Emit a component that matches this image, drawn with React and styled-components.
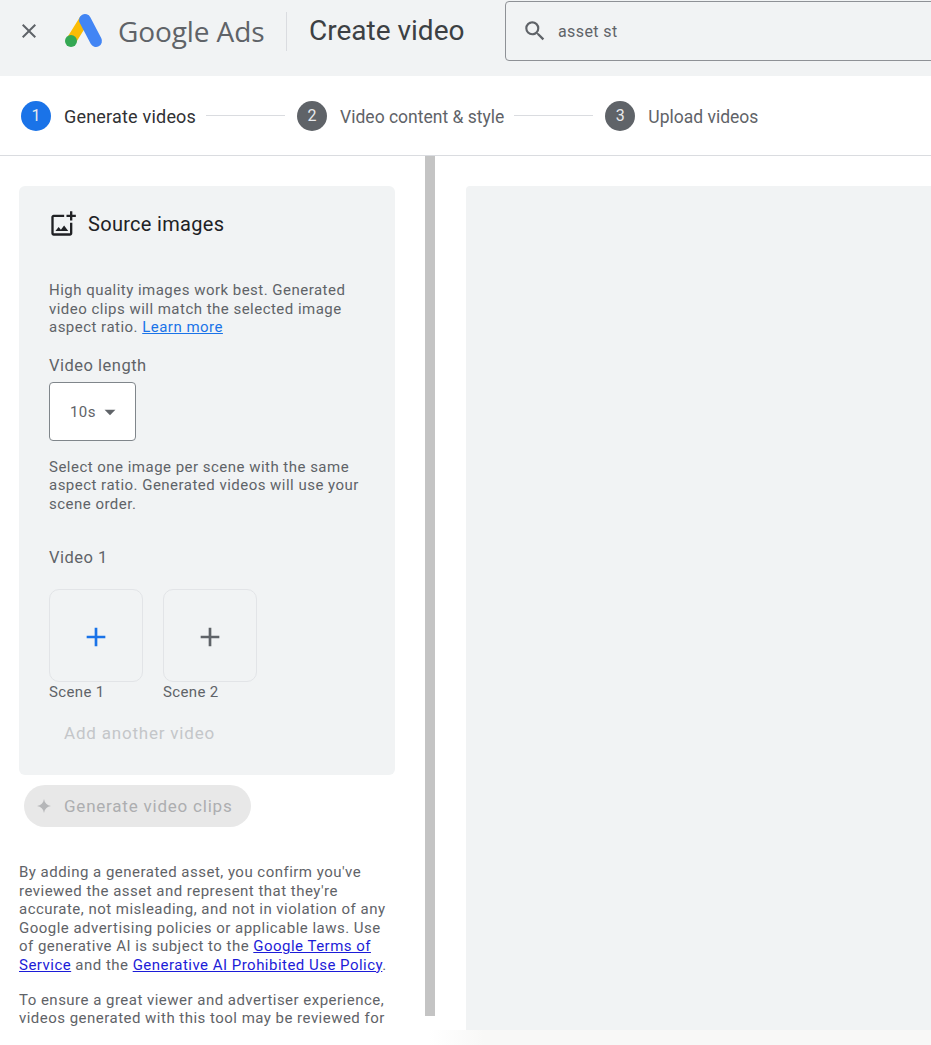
import React from 'react';
import styled, { createGlobalStyle } from 'styled-components';
import { MdOutlineAddPhotoAlternate, MdClose, MdSearch, MdArrowDropDown, MdAdd } from 'react-icons/md';

const GlobalStyle = createGlobalStyle`
  html, body {
    margin: 0;
    padding: 0;
    background: #fff;
    overflow: hidden;
  }
  * {
    box-sizing: border-box;
  }
`;

const Page = styled.div`
  width: 931px;
  height: 1045px;
  display: flex;
  flex-direction: column;
  overflow: hidden;
  font-family: Roboto, 'Liberation Sans', sans-serif;
  color: #5f6368;
`;

const Header = styled.header`
  height: 76px;
  flex: none;
  display: flex;
  align-items: flex-start;
  background: #f1f3f4;
  overflow: hidden;
`;

const CloseButton = styled.div`
  width: 58px;
  height: 62px;
  flex: none;
  padding-left: 17px;
  display: flex;
  align-items: center;
  color: #5f6368;
`;

const LogoMark = styled.svg`
  width: 44px;
  height: 40px;
  margin-top: 11px;
  margin-left: 3px;
  flex: none;
`;

const Brand = styled.div`
  margin-left: 13px;
  height: 62px;
  line-height: 62px;
  font-family: 'Open Sans', Roboto, sans-serif;
  font-size: 28px;
  letter-spacing: -0.1px;
  color: #5f6368;
  width: 168px;
  flex: none;
`;

const Divider = styled.div`
  width: 1px;
  height: 39px;
  margin-top: 12px;
  background: #dadce0;
  flex: none;
`;

const PageTitle = styled.div`
  margin-left: 22px;
  height: 62px;
  line-height: 62px;
  font-size: 28px;
  color: #3c4043;
  width: 174px;
  flex: none;
`;

const SearchBox = styled.div`
  margin-left: 22px;
  margin-top: 1px;
  width: 500px;
  height: 60px;
  flex: none;
  display: flex;
  align-items: center;
  gap: 10px;
  padding-left: 16px;
  border: 1px solid #8e9196;
  border-radius: 4px;
  font-size: 16px;
  letter-spacing: 0.4px;
  color: #5f6368;
`;

const Stepper = styled.nav`
  height: 80px;
  flex: none;
  display: flex;
  align-items: center;
  padding: 0 0 0 21px;
  border-bottom: 1px solid #dadce0;
  background: #fff;
`;

const StepCircle = styled.div`
  width: 30px;
  height: 30px;
  border-radius: 50%;
  flex: none;
  display: flex;
  align-items: center;
  justify-content: center;
  font-size: 16px;
  color: #e8eaed;
  background: ${(p) => (p.$active ? '#1a73e8' : '#5f6368')};
`;

const StepLabel = styled.span`
  margin-left: 13px;
  padding-top: ${(p) => (p.$active ? '1px' : '2px')};
  font-size: ${(p) => (p.$active ? '18px' : '17.5px')};
  white-space: nowrap;
  letter-spacing: ${(p) => (p.$active ? '0.2px' : '0')};
  color: ${(p) => (p.$active ? '#303134' : '#5f6368')};
`;

const StepLine = styled.div`
  width: 79px;
  height: 1px;
  margin: 0 12px 0 10px;
  background: #dadce0;
  flex: none;
`;

const Main = styled.div`
  flex: 1;
  min-height: 0;
  display: flex;
`;

const LeftPane = styled.aside`
  width: 425px;
  flex: none;
  padding: 30px 30px 0 19px;
  overflow: hidden;
`;

const Scrollbar = styled.div`
  width: 10px;
  height: 860px;
  flex: none;
  background: #c4c4c4;
`;

const RightPane = styled.section`
  flex: 1;
  padding: 30px 0 0 31px;
`;

const PreviewPanel = styled.div`
  height: 100%;
  background: #f1f3f4;
  border-radius: 4px 0 0 0;
`;

const Card = styled.div`
  width: 376px;
  height: 589px;
  background: #f1f3f4;
  border-radius: 6px;
  padding: 24px 30px 0;
`;

const CardTitle = styled.div`
  display: flex;
  align-items: center;
  gap: 11px;
  height: 28px;
  font-size: 20px;
  letter-spacing: 0.3px;
  color: #202124;
`;

const HelpText = styled.p`
  margin: ${(p) => p.$top || 0}px 0 0;
  width: 312px;
  font-size: 15px;
  line-height: 18.6px;
  letter-spacing: 0.48px;
  color: #5f6368;
`;

const BlueLink = styled.a`
  color: #1a73e8;
  text-decoration: underline;
`;

const FieldLabel = styled.div`
  margin-top: ${(p) => p.$top}px;
  font-size: 16.5px;
  line-height: 20px;
  letter-spacing: 0.5px;
  color: #5f6368;
`;

const SelectBox = styled.div`
  margin-top: 6px;
  width: 87px;
  height: 59px;
  display: flex;
  align-items: center;
  padding: 2px 0 0 20px;
  background: #fff;
  border: 1px solid #80868b;
  border-radius: 4px;
  font-size: 15px;
  letter-spacing: 0.4px;
  color: #5f6368;

  svg {
    margin-left: 1px;
  }
`;

const Scenes = styled.div`
  display: flex;
  gap: 20px;
  margin-top: 21px;
`;

const Scene = styled.div`
  display: flex;
  flex-direction: column;
`;

const SceneTile = styled.div`
  width: 94px;
  height: 93px;
  padding-top: 3px;
  display: flex;
  align-items: center;
  justify-content: center;
  border: 1px solid #e2e4e7;
  border-radius: 10px;
  color: ${(p) => (p.$active ? '#1a73e8' : '#5f6368')};
`;

const SceneLabel = styled.div`
  font-size: 15px;
  line-height: 20px;
  letter-spacing: 0.35px;
  color: #5f6368;
`;

const AddVideo = styled.div`
  margin: 21px 0 0 15px;
  font-size: 17px;
  line-height: 20px;
  letter-spacing: 0.8px;
  color: #c4c6c9;
`;

const GenerateButton = styled.div`
  margin: 10px 0 0 5px;
  width: 227px;
  height: 42px;
  display: flex;
  align-items: center;
  gap: 13px;
  padding-left: 13px;
  border-radius: 21px;
  background: #e8e8e8;
  font-size: 17px;
  letter-spacing: 0.78px;
  color: #adaeb0;
`;

const Notice = styled.p`
  margin: ${(p) => p.$top}px 0 0;
  width: 372px;
  font-size: 15px;
  line-height: 18.6px;
  letter-spacing: 0.48px;
  color: #5f6368;
`;

const PolicyLink = styled.a`
  color: #1c1cd8;
  text-decoration: underline;
`;

const Footer = styled.div`
  height: 15px;
  flex: none;
  background: linear-gradient(to right, #fff 46%, #f8f8f7 52%);
`;

function GoogleAdsLogo() {
  return (
    <LogoMark viewBox="0 0 44 40">
      <path d="M10 30 L23 9" stroke="#fbbc04" strokeWidth="10" strokeLinecap="round" />
      <path d="M24 9 L35 30" stroke="#4285f4" strokeWidth="12" strokeLinecap="round" />
      <circle cx="10" cy="30" r="6" fill="#34a853" />
    </LogoMark>
  );
}

function Spark() {
  return (
    <svg width="14" height="14" viewBox="0 0 14 14">
      <path d="M7 0 C7.6 4 10 6.4 14 7 C10 7.6 7.6 10 7 14 C6.4 10 4 7.6 0 7 C4 6.4 6.4 4 7 0 Z" fill="#b5b6b8" />
    </svg>
  );
}

const steps = [
  { n: 1, label: 'Generate videos', active: true },
  { n: 2, label: 'Video content & style' },
  { n: 3, label: 'Upload videos' },
];

export default function App() {
  return (
    <Page>
      <GlobalStyle />
      <Header>
        <CloseButton>
          <MdClose size={24} />
        </CloseButton>
        <GoogleAdsLogo />
        <Brand>Google Ads</Brand>
        <Divider />
        <PageTitle>Create video</PageTitle>
        <SearchBox>
          <MdSearch size={26} />
          <span>asset st</span>
        </SearchBox>
      </Header>
      <Stepper>
        {steps.map((s, i) => (
          <React.Fragment key={s.n}>
            <StepCircle $active={s.active}>{s.n}</StepCircle>
            <StepLabel $active={s.active}>{s.label}</StepLabel>
            {i < steps.length - 1 && <StepLine />}
          </React.Fragment>
        ))}
      </Stepper>
      <Main>
        <LeftPane>
          <Card>
            <CardTitle>
              <MdOutlineAddPhotoAlternate size={28} />
              Source images
            </CardTitle>
            <HelpText $top={43}>
              High quality images work best. Generated video clips will match the selected image
              aspect ratio. <BlueLink>Learn more</BlueLink>
            </HelpText>
            <FieldLabel $top={19}>Video length</FieldLabel>
            <SelectBox>
              10s
              <MdArrowDropDown size={26} />
            </SelectBox>
            <HelpText $top={17}>
              Select one image per scene with the same aspect ratio. Generated videos will use your
              scene order.
            </HelpText>
            <FieldLabel $top={34}>Video 1</FieldLabel>
            <Scenes>
              <Scene>
                <SceneTile $active>
                  <MdAdd size={32} />
                </SceneTile>
                <SceneLabel>Scene 1</SceneLabel>
              </Scene>
              <Scene>
                <SceneTile>
                  <MdAdd size={32} />
                </SceneTile>
                <SceneLabel>Scene 2</SceneLabel>
              </Scene>
            </Scenes>
            <AddVideo>Add another video</AddVideo>
          </Card>
          <GenerateButton>
            <Spark />
            Generate video clips
          </GenerateButton>
          <Notice $top={36}>
            By adding a generated asset, you confirm you've reviewed the asset and represent that
            they're accurate, not misleading, and not in violation of any Google advertising
            policies or applicable laws. Use of generative AI is subject to the{' '}
            <PolicyLink>Google Terms of Service</PolicyLink> and the{' '}
            <PolicyLink>Generative AI Prohibited Use Policy</PolicyLink>.
          </Notice>
          <Notice $top={16}>
            To ensure a great viewer and advertiser experience, videos generated with this tool may
            be reviewed for quality of outputs and compliance with Policies
          </Notice>
        </LeftPane>
        <Scrollbar />
        <RightPane>
          <PreviewPanel />
        </RightPane>
      </Main>
      <Footer />
    </Page>
  );
}
